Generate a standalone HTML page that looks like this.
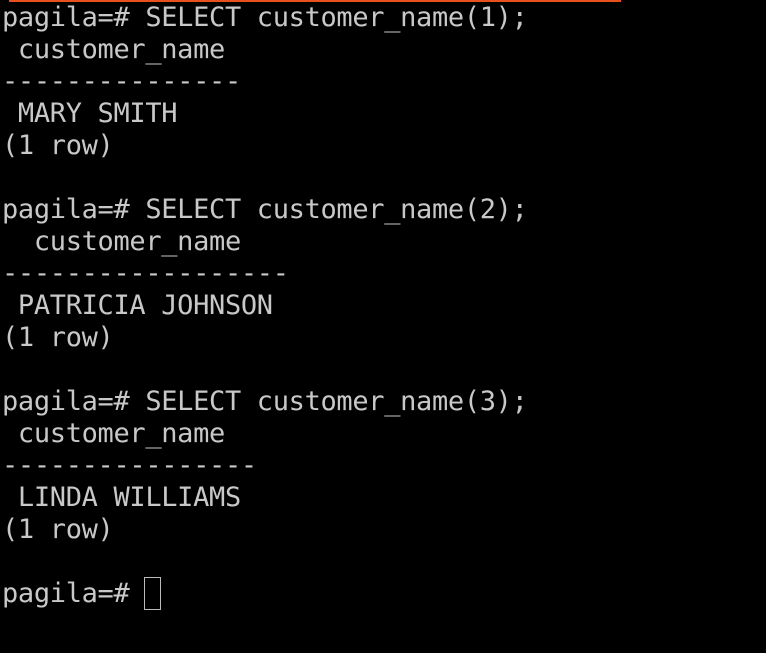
<!DOCTYPE html>
<html><head><style>
html,body{margin:0;padding:0;background:#000;width:766px;height:653px;overflow:hidden}
.bar{position:absolute;left:9px;top:0;width:612px;height:2px;background:#e8501e}
pre{position:absolute;left:2px;top:2px;margin:0;font-family:"DejaVu Sans Mono","Liberation Mono",monospace;font-size:27px;letter-spacing:-0.33px;line-height:32px;color:#c8c8c8}
.cur{position:absolute;left:144px;top:577px;width:15px;height:31px;border:1px solid #bbb}
</style></head><body>
<div class="bar"></div>
<pre>pagila=# SELECT customer_name(1);
 customer_name
---------------
 MARY SMITH
(1 row)

pagila=# SELECT customer_name(2);
  customer_name
------------------
 PATRICIA JOHNSON
(1 row)

pagila=# SELECT customer_name(3);
 customer_name
----------------
 LINDA WILLIAMS
(1 row)

pagila=# </pre>
<div class="cur"></div>
</body></html>
